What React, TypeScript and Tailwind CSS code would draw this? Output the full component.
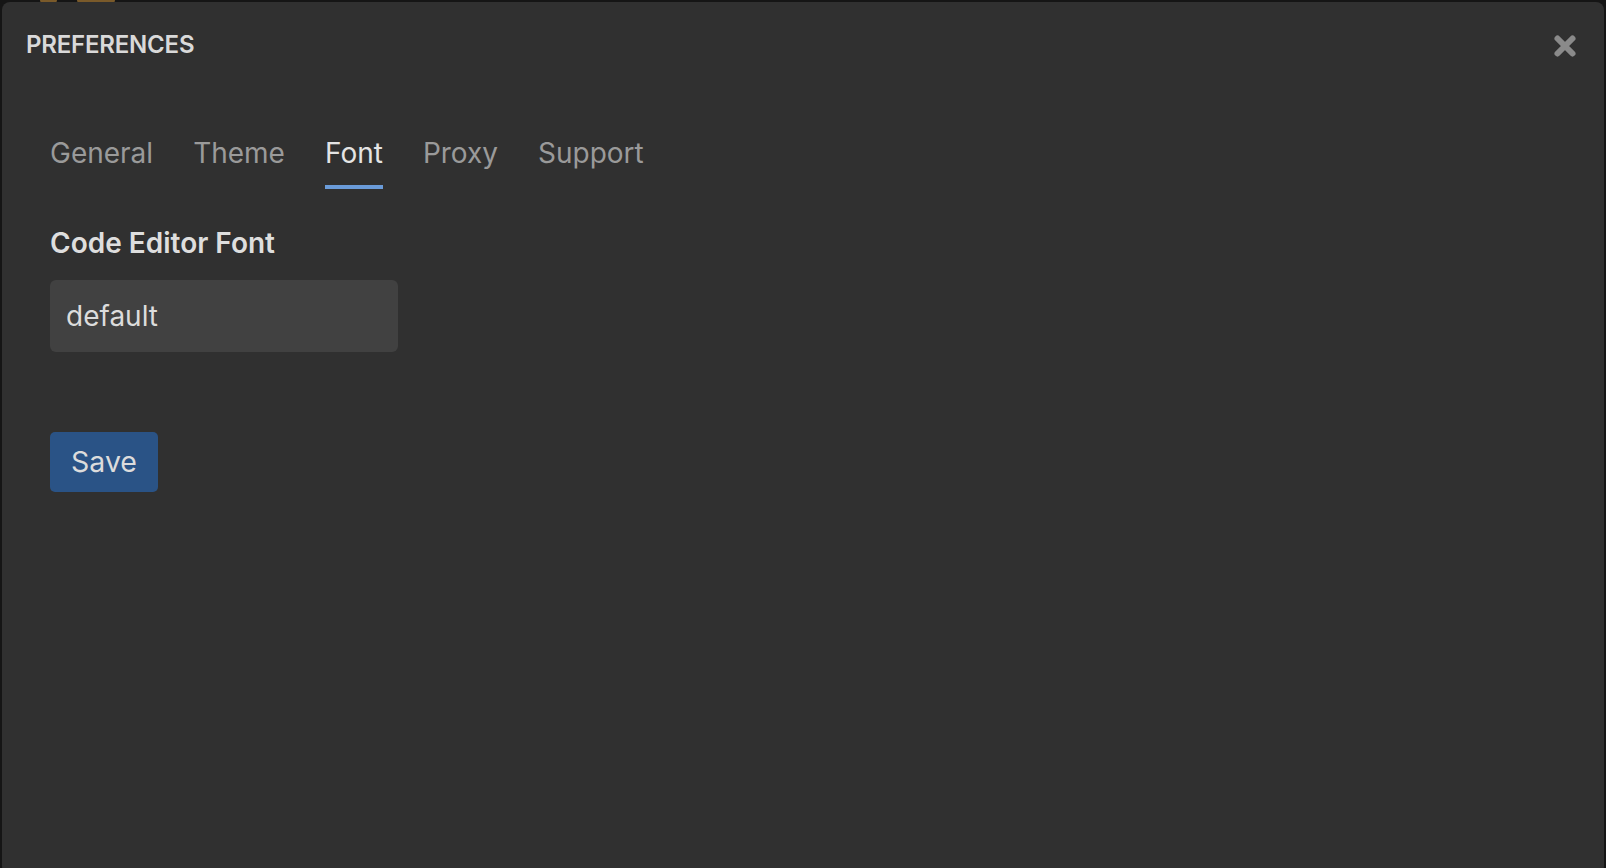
import { useState } from "react";

const tabs = ["General", "Theme", "Font", "Proxy", "Support"];

function CloseIcon() {
  return (
    <svg width="24" height="24" viewBox="0 0 24 24" fill="none">
      <path
        d="M4.5 4.5 L19.5 19.5 M19.5 4.5 L4.5 19.5"
        stroke="#8a8a8a"
        strokeWidth="6"
        strokeLinecap="round"
      />
    </svg>
  );
}

export default function App() {
  const [active, setActive] = useState("Font");
  const [font, setFont] = useState("default");

  return (
    <div
      className="relative h-screen w-full overflow-hidden bg-[#151515] px-[2px] pt-[2px]"
      style={{ fontFamily: "Inter, 'Noto Sans', sans-serif" }}
    >
      {/* bits of the window behind the modal */}
      <div className="absolute left-[40px] top-0 h-[3px] w-[17px] rounded-b-sm bg-[#7a5a2a]" />
      <div className="absolute left-[77px] top-0 h-[3px] w-[38px] rounded-b-sm bg-[#7a5a2a]" />

      <div className="relative h-[872px] rounded-[8px] bg-[#303030]">
        <div className="flex items-start justify-between pl-[24px] pr-[27px] pt-[29px]">
          <h2 className="text-[24px] font-semibold leading-[28px] tracking-[-0.2px] text-[#d9d9d9]">
            PREFERENCES
          </h2>
          <button className="mt-[2px] flex h-[26px] w-[24px] items-center justify-center">
            <CloseIcon />
          </button>
        </div>

        <div className="px-[48px]">
          <div className="mt-[76px] flex gap-[40px]">
            {tabs.map((t) => (
              <button
                key={t}
                onClick={() => setActive(t)}
                className={
                  t === active
                    ? "border-b-[4px] border-[#6a9bd8] pb-[14px] text-[28px] leading-[36px] text-[#e4e4e4]"
                    : "border-b-[4px] border-transparent pb-[14px] text-[28px] leading-[36px] text-[#9a9a9a]"
                }
              >
                {t}
              </button>
            ))}
          </div>

          <label className="mt-[36px] block text-[28px] font-semibold leading-[36px] text-[#dedede]">
            Code Editor Font
          </label>
          <input
            value={font}
            onChange={(e) => setFont(e.target.value)}
            className="mt-[19px] block h-[72px] w-[348px] rounded-[6px] bg-[#414141] px-[16px] text-[28px] text-[#dcdcdc] outline-none"
          />

          <button className="mt-[80px] flex h-[60px] w-[108px] items-center justify-center rounded-[5px] bg-[#2a5386] text-[28.5px] text-[#dcdcdc]">
            Save
          </button>
        </div>
      </div>
    </div>
  );
}
